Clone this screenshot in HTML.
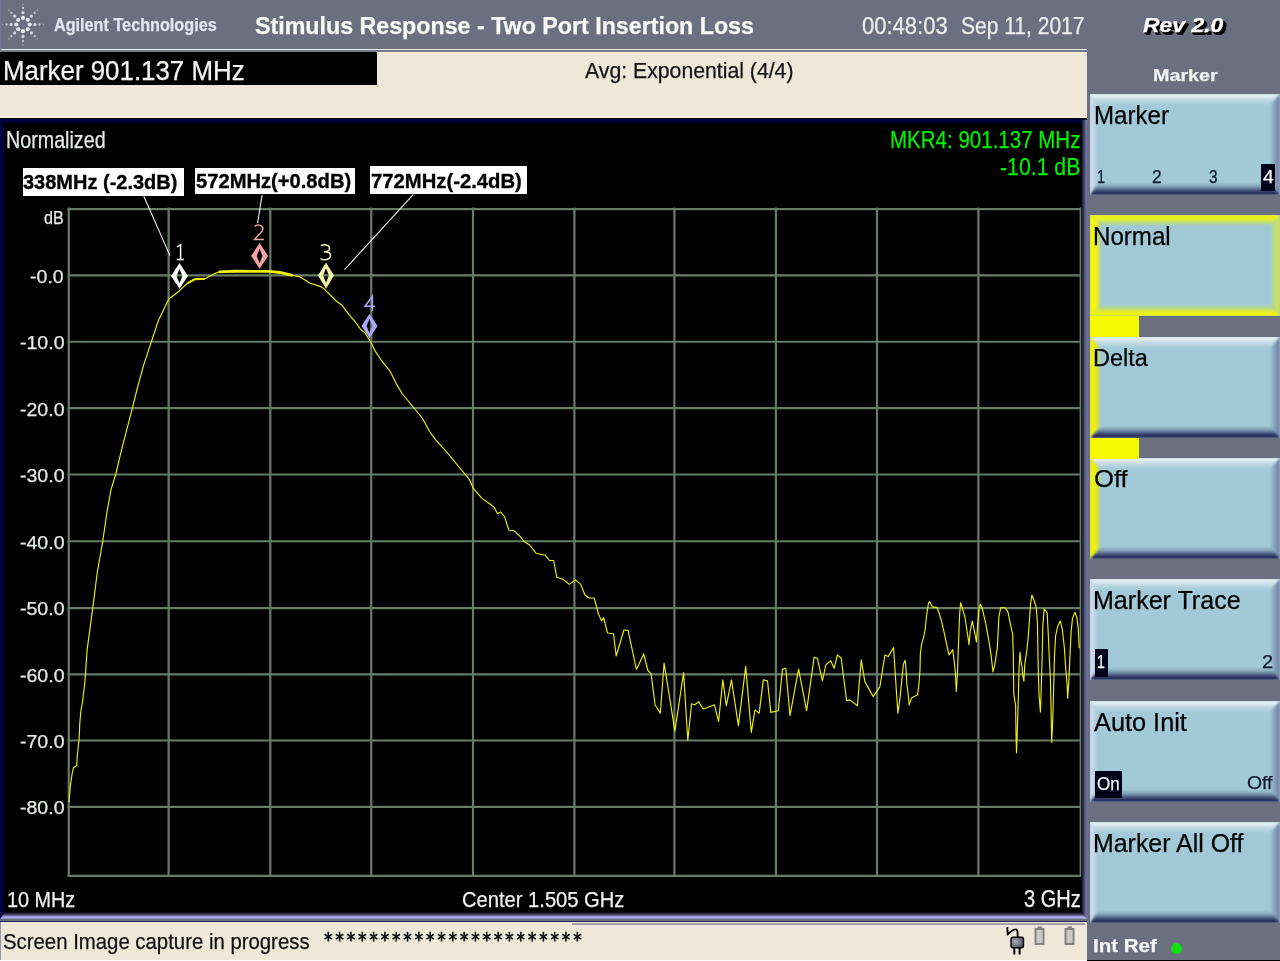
<!DOCTYPE html>
<html><head><meta charset="utf-8"><style>
html,body{margin:0;padding:0}
body{width:1280px;height:961px;overflow:hidden;position:relative;background:#6a7080;font-family:"Liberation Sans",sans-serif}
.a{position:absolute}
.t{position:absolute;white-space:pre;transform-origin:0 0;font-family:"Liberation Sans",sans-serif;-webkit-text-stroke:0.25px currentColor}
.sk{position:absolute;left:1090px;width:190px;height:101px;background:#a1c9d7;overflow:hidden}
.sk .bt{position:absolute;left:0;top:0;width:100%;height:11px;background:linear-gradient(to bottom,#f2f5fb 0,#dde8f0 3px,#a1c9d7 11px)}
.sk .bb{position:absolute;left:0;bottom:0;width:100%;height:11px;background:linear-gradient(to top,#1e1e4c 0,#303868 2px,#6a88a0 6px,#a1c9d7 11px)}
.sk .bl{position:absolute;left:0;top:0;width:8px;height:100%;background:linear-gradient(to right,#d2dcf0 0,#c4d6e8 3px,rgba(162,202,216,0) 8px)}
.sk .br{position:absolute;right:0;top:0;width:6px;height:100%;background:linear-gradient(to left,#7884a0 0,#8ca4b8 2px,rgba(162,202,216,0) 6px)}
.hl{position:absolute;background:#000018}
</style></head><body>

<div class="a" style="left:0;top:0;width:1px;height:50px;background:#7478a0"></div>
<div class="a" style="left:1px;top:49px;width:1086px;height:1px;background:#e6eaea"></div>
<div class="a" style="left:0;top:50px;width:1087px;height:2px;background:#737a8a"></div>
<svg class="a" style="left:0;top:0" width="50" height="48"><circle cx="23.00" cy="17.80" r="2.1" fill="#f4f6fa" fill-opacity="0.9"/><circle cx="27.74" cy="19.76" r="2.1" fill="#f4f6fa" fill-opacity="0.9"/><circle cx="29.70" cy="24.50" r="2.1" fill="#f4f6fa" fill-opacity="0.9"/><circle cx="27.74" cy="29.24" r="2.1" fill="#f4f6fa" fill-opacity="0.9"/><circle cx="23.00" cy="31.20" r="2.1" fill="#f4f6fa" fill-opacity="0.9"/><circle cx="18.26" cy="29.24" r="2.1" fill="#f4f6fa" fill-opacity="0.9"/><circle cx="16.30" cy="24.50" r="2.1" fill="#f4f6fa" fill-opacity="0.9"/><circle cx="18.26" cy="19.76" r="2.1" fill="#f4f6fa" fill-opacity="0.9"/><circle cx="23.00" cy="12.60" r="1.55" fill="#f4f6fa" fill-opacity="0.8"/><circle cx="31.41" cy="16.09" r="1.55" fill="#f4f6fa" fill-opacity="0.8"/><circle cx="34.90" cy="24.50" r="1.55" fill="#f4f6fa" fill-opacity="0.8"/><circle cx="31.41" cy="32.91" r="1.55" fill="#f4f6fa" fill-opacity="0.8"/><circle cx="23.00" cy="36.40" r="1.55" fill="#f4f6fa" fill-opacity="0.8"/><circle cx="14.59" cy="32.91" r="1.55" fill="#f4f6fa" fill-opacity="0.8"/><circle cx="11.10" cy="24.50" r="1.55" fill="#f4f6fa" fill-opacity="0.8"/><circle cx="14.59" cy="16.09" r="1.55" fill="#f4f6fa" fill-opacity="0.8"/><circle cx="23.00" cy="8.00" r="1.15" fill="#f4f6fa" fill-opacity="0.65"/><circle cx="34.67" cy="12.83" r="1.15" fill="#f4f6fa" fill-opacity="0.65"/><circle cx="39.50" cy="24.50" r="1.15" fill="#f4f6fa" fill-opacity="0.65"/><circle cx="34.67" cy="36.17" r="1.15" fill="#f4f6fa" fill-opacity="0.65"/><circle cx="23.00" cy="41.00" r="1.15" fill="#f4f6fa" fill-opacity="0.65"/><circle cx="11.33" cy="36.17" r="1.15" fill="#f4f6fa" fill-opacity="0.65"/><circle cx="6.50" cy="24.50" r="1.15" fill="#f4f6fa" fill-opacity="0.65"/><circle cx="11.33" cy="12.83" r="1.15" fill="#f4f6fa" fill-opacity="0.65"/><circle cx="23.00" cy="4.20" r="0.85" fill="#f4f6fa" fill-opacity="0.4"/><circle cx="37.35" cy="10.15" r="0.85" fill="#f4f6fa" fill-opacity="0.4"/><circle cx="43.30" cy="24.50" r="0.85" fill="#f4f6fa" fill-opacity="0.4"/><circle cx="37.35" cy="38.85" r="0.85" fill="#f4f6fa" fill-opacity="0.4"/><circle cx="23.00" cy="44.80" r="0.85" fill="#f4f6fa" fill-opacity="0.4"/><circle cx="8.65" cy="38.85" r="0.85" fill="#f4f6fa" fill-opacity="0.4"/><circle cx="2.70" cy="24.50" r="0.85" fill="#f4f6fa" fill-opacity="0.4"/><circle cx="8.65" cy="10.15" r="0.85" fill="#f4f6fa" fill-opacity="0.4"/></svg>
<div class="a" style="left:0;top:52px;width:1087px;height:66px;background:#efe8d9"></div>
<div class="a" style="left:0;top:116.5px;width:1087px;height:1px;background:#faf2e4"></div>
<div class="a" style="left:0;top:52.4px;width:376.6px;height:32.5px;background:#000"></div>
<div class="a" style="left:0;top:118px;width:1087px;height:804px;background:#000"></div>
<div class="a" style="left:0;top:119px;width:1083px;height:5px;background:linear-gradient(to bottom,#000040 0,#00004c 1.5px,#000030 3px,#000 5px)"></div>
<div class="a" style="left:0;top:119px;width:5px;height:800px;background:linear-gradient(to right,#00004c 0,#000048 2px,#000020 3.5px,#000 5px)"></div>
<div class="a" style="left:1081px;top:120px;width:6px;height:799px;background:linear-gradient(to right,#000 0,#2a2a48 2px,#6c6ca0 5px,#6870a0 6px)"></div>
<div class="a" style="left:0;top:912px;width:1087px;height:7px;background:linear-gradient(to bottom,#000 0,#50507a 3px,#b0b0f0 5px,#a8a8e0 6px,#8088a8 7px);clip-path:polygon(5px 0,1081px 0,1087px 7px,0 7px)"></div>
<div class="a" style="left:0;top:919px;width:1087px;height:2px;background:#687080"></div>
<div class="a" style="left:0;top:921px;width:1087px;height:1px;background:#24245a"></div>
<svg class="a" style="left:0;top:0" width="1087" height="922"><line x1="68.75" y1="207.6" x2="68.75" y2="876.8" stroke="#687a68" stroke-width="2.2"/><line x1="168.60" y1="207.6" x2="168.60" y2="876.8" stroke="#687a68" stroke-width="2.2"/><line x1="270.30" y1="207.6" x2="270.30" y2="876.8" stroke="#687a68" stroke-width="2.2"/><line x1="371.25" y1="207.6" x2="371.25" y2="876.8" stroke="#687a68" stroke-width="2.2"/><line x1="473.00" y1="207.6" x2="473.00" y2="876.8" stroke="#687a68" stroke-width="2.2"/><line x1="574.40" y1="207.6" x2="574.40" y2="876.8" stroke="#687a68" stroke-width="2.2"/><line x1="674.40" y1="207.6" x2="674.40" y2="876.8" stroke="#687a68" stroke-width="2.2"/><line x1="775.90" y1="207.6" x2="775.90" y2="876.8" stroke="#687a68" stroke-width="2.2"/><line x1="877.00" y1="207.6" x2="877.00" y2="876.8" stroke="#687a68" stroke-width="2.2"/><line x1="978.40" y1="207.6" x2="978.40" y2="876.8" stroke="#687a68" stroke-width="2.2"/><line x1="1080.40" y1="207.6" x2="1080.40" y2="876.8" stroke="#687a68" stroke-width="1.6"/><line x1="67.6" y1="209.05" x2="1081" y2="209.05" stroke="#687a68" stroke-width="2.2"/><line x1="67.6" y1="275.35" x2="1081" y2="275.35" stroke="#687a68" stroke-width="2.2"/><line x1="67.6" y1="341.75" x2="1081" y2="341.75" stroke="#687a68" stroke-width="2.2"/><line x1="67.6" y1="408.10" x2="1081" y2="408.10" stroke="#687a68" stroke-width="2.2"/><line x1="67.6" y1="474.50" x2="1081" y2="474.50" stroke="#687a68" stroke-width="2.2"/><line x1="67.6" y1="541.25" x2="1081" y2="541.25" stroke="#687a68" stroke-width="2.2"/><line x1="67.6" y1="608.05" x2="1081" y2="608.05" stroke="#687a68" stroke-width="2.2"/><line x1="67.6" y1="674.40" x2="1081" y2="674.40" stroke="#687a68" stroke-width="2.2"/><line x1="67.6" y1="740.50" x2="1081" y2="740.50" stroke="#687a68" stroke-width="2.2"/><line x1="67.6" y1="806.90" x2="1081" y2="806.90" stroke="#687a68" stroke-width="2.2"/><line x1="67.6" y1="875.80" x2="1081" y2="875.80" stroke="#687a68" stroke-width="2.2"/><polyline points="69.0,802.0 70.4,785.4 71.9,775.0 73.5,767.7 76.7,765.6 77.3,756.0 79.2,737.5 79.8,723.0 80.8,711.5 82.5,702.0 83.5,693.8 85.0,681.0 86.0,665.6 87.1,650.2 92.7,608.3 97.5,570.8 102.7,541.7 106.9,512.5 111.0,489.6 115.8,474.0 121.5,450.2 132.3,408.3 137.5,387.5 143.8,364.6 151.7,340.6 158.3,320.8 168.8,299.0 177.0,292.7 180.0,290.2 187.8,283.0 194.8,279.2 205.0,278.8 214.4,273.8 219.0,271.9 233.0,271.9 234.7,271.0 269.0,271.4 280.0,272.5 292.5,275.3 300.3,276.9 309.7,283.0 320.6,286.6 323.8,288.6 336.2,301.0 342.5,305.8 348.8,314.4 354.6,321.2 361.2,330.0 365.0,332.7 371.2,343.0 375.4,351.4 381.6,360.7 390.0,371.1 396.2,383.6 402.4,394.0 412.8,406.5 422.2,418.0 429.5,431.5 435.7,439.8 446.1,451.3 460.7,469.0 469.4,479.4 473.5,488.7 481.8,498.1 490.2,504.3 494.3,507.5 497.5,513.7 500.6,512.0 504.7,516.8 508.9,530.3 514.1,530.8 520.3,536.6 524.5,541.8 529.7,545.0 536.0,553.2 545.3,555.3 549.5,560.5 553.6,560.5 556.8,577.2 563.0,579.2 569.2,584.4 575.5,579.9 580.7,584.4 584.8,594.8 589.0,598.0 594.2,598.0 598.4,613.6 601.5,620.9 603.6,617.7 607.5,633.0 613.5,633.7 616.2,656.0 623.9,630.0 628.1,630.4 636.4,669.5 643.7,653.9 647.9,670.5 651.0,673.6 655.1,704.8 660.3,713.2 664.1,663.2 674.9,730.9 683.6,672.6 687.8,740.2 691.6,703.8 694.7,704.8 698.8,701.7 703.0,709.0 706.1,708.0 714.4,704.8 718.6,721.5 722.8,679.9 726.3,705.9 731.5,679.9 738.4,725.6 745.7,666.4 751.3,732.4 755.0,709.9 759.2,713.2 763.3,679.9 767.5,680.8 770.8,712.4 778.3,710.7 782.5,669.1 785.8,668.3 790.0,715.7 798.6,669.1 806.6,710.7 814.1,657.4 817.4,658.3 822.4,680.8 825.8,664.9 830.8,660.8 834.1,668.3 837.4,654.9 841.2,658.3 846.6,700.7 849.9,699.9 857.4,705.7 861.2,659.9 864.9,681.6 873.2,696.6 879.9,686.6 884.9,655.0 888.2,656.6 893.5,647.5 897.9,713.2 900.0,698.1 902.0,677.8 903.4,664.3 905.1,660.3 906.1,669.7 906.8,683.2 908.4,696.8 909.2,704.9 911.5,698.1 917.6,694.7 918.9,684.6 920.0,669.7 920.3,654.9 921.6,644.1 923.6,637.3 925.0,630.5 926.4,617.0 928.4,603.5 929.5,601.5 932.4,606.9 937.2,607.6 941.2,619.7 944.6,634.6 946.6,644.1 948.9,654.9 951.1,652.2 952.7,649.5 954.1,660.3 955.4,673.8 956.3,691.4 957.4,673.8 958.4,646.8 959.5,617.0 960.5,602.8 962.2,607.6 964.9,617.0 966.9,630.5 968.2,638.6 968.9,644.7 970.3,630.5 972.3,621.1 974.3,630.5 976.4,642.0 977.7,623.8 979.1,608.9 980.4,604.2 982.4,608.9 985.8,623.8 989.2,642.7 991.2,656.2 993.0,671.8 994.6,665.7 997.3,648.1 998.9,617.0 1000.7,607.6 1005.3,607.7 1008.0,612.1 1010.6,625.4 1012.7,634.2 1013.3,655.5 1013.8,694.4 1015.6,705.0 1016.0,733.4 1016.5,752.8 1017.2,733.4 1018.2,701.5 1019.1,667.9 1020.0,652.0 1020.9,660.8 1022.1,667.9 1022.7,675.0 1023.9,681.2 1024.8,664.3 1026.9,650.2 1028.3,636.0 1029.7,616.5 1030.6,603.3 1031.9,595.0 1034.5,601.5 1036.3,607.7 1037.5,624.5 1038.0,657.3 1038.9,692.7 1040.4,712.1 1041.1,692.7 1042.1,659.0 1042.8,626.3 1044.1,608.8 1047.2,613.0 1048.3,635.0 1049.6,664.3 1050.4,678.5 1051.3,721.0 1051.7,742.2 1052.7,721.0 1053.5,692.7 1054.5,655.5 1055.6,636.0 1057.6,626.5 1060.3,621.1 1062.3,629.2 1064.4,648.2 1065.7,668.5 1067.1,684.7 1067.7,698.3 1068.7,683.4 1069.8,659.0 1071.1,632.0 1072.5,618.4 1074.9,612.3 1076.8,617.1 1078.2,627.9 1079.2,648.2" fill="none" stroke="#f0f000" stroke-width="1.15" stroke-linejoin="round"/><polyline points="219,271.9 234.7,271.2 269,271.4 280,272.5 292.5,275.3" fill="none" stroke="#f0f000" stroke-width="2.8"/><polyline points="187.8,283 194.8,279.2 205,278.75" fill="none" stroke="#f0f000" stroke-width="2.0"/><line x1="143.8" y1="196.2" x2="170" y2="255.6" stroke="#f0f0f0" stroke-width="1.1"/><line x1="262.1" y1="195.2" x2="257.6" y2="223" stroke="#f0f0f0" stroke-width="1.1"/><line x1="413.4" y1="194.3" x2="344.5" y2="269.7" stroke="#f0f0f0" stroke-width="1.1"/><path d="M179.50,263.00 L187.90,275.90 L179.50,288.80 L171.10,275.90 Z M179.50,268.65 L182.40,275.90 L179.50,283.15 L176.60,275.90 Z" fill="#ffffff" fill-rule="evenodd"/><path d="M259.60,243.00 L268.00,255.90 L259.60,268.80 L251.20,255.90 Z M259.60,248.65 L262.50,255.90 L259.60,263.15 L256.70,255.90 Z" fill="#f4a4a4" fill-rule="evenodd"/><path d="M326.00,262.45 L334.00,275.60 L326.00,288.75 L318.00,275.60 Z M326.00,268.35 L328.90,275.60 L326.00,282.85 L323.10,275.60 Z" fill="#f4f4a8" fill-rule="evenodd"/><path d="M369.50,313.75 L377.50,326.00 L369.50,338.25 L361.50,326.00 Z M369.50,318.75 L372.40,326.00 L369.50,333.25 L366.60,326.00 Z" fill="#a8a8fc" fill-rule="evenodd"/><path d="M177.0,246.79999999999998 L180.6,244.79999999999998 L180.6,259.5 M176.79999999999998,259.5 L183.79999999999998,259.5" fill="none" stroke="#ffffff" stroke-width="1.5"/><path d="M254.8,226.39999999999998 C256.4,224.5 262.5,224.2 262.9,228.5 C263.1,231.7 258.9,234.2 254.6,239.39999999999998 L263.9,239.39999999999998" fill="none" stroke="#f4a4a4" stroke-width="1.5"/><path d="M320.9,245.7 C323.2,244.39999999999998 329.5,244.2 329.5,248.2 C329.5,251.0 326.7,251.79999999999998 323.9,251.79999999999998 C327.7,251.79999999999998 330.5,252.79999999999998 330.5,255.39999999999998 C330.5,260.0 323.2,260.4 320.4,258.7" fill="none" stroke="#f4f4a8" stroke-width="1.5"/><path d="M375.0,306.3 L365.0,306.3 L372.4,296.3 L372.4,311.09999999999997" fill="none" stroke="#a8a8fc" stroke-width="1.5" stroke-linejoin="miter"/></svg>
<div class="a" style="left:22.6px;top:167.7px;width:161px;height:28.5px;background:#fff"></div>
<div class="a" style="left:195.3px;top:167.7px;width:160px;height:26.8px;background:#fff"></div>
<div class="a" style="left:370.1px;top:166.3px;width:157px;height:27.5px;background:#fff"></div>
<div class="a" style="left:0;top:922px;width:1087px;height:39px;background:#efe8d9"></div>
<div class="a" style="left:0;top:922px;width:1px;height:39px;background:#9098a8"></div>
<div class="a" style="left:572px;top:923.3px;width:513px;height:1.6px;background:#a0a2a6"></div>
<div class="a" style="left:0;top:960px;width:1087px;height:1px;background:#fbfbfb"></div>
<div class="a" style="left:1087px;top:959.5px;width:193px;height:1.5px;background:#000"></div>
<svg class="a" style="left:0;top:0" width="1087" height="961"><line x1="328.30" y1="931.80" x2="328.30" y2="941.60" stroke="#111" stroke-width="1.6"/><line x1="324.58" y1="934.25" x2="332.02" y2="939.15" stroke="#111" stroke-width="1.6"/><line x1="324.58" y1="939.15" x2="332.02" y2="934.25" stroke="#111" stroke-width="1.6"/><line x1="339.62" y1="931.80" x2="339.62" y2="941.60" stroke="#111" stroke-width="1.6"/><line x1="335.90" y1="934.25" x2="343.34" y2="939.15" stroke="#111" stroke-width="1.6"/><line x1="335.90" y1="939.15" x2="343.34" y2="934.25" stroke="#111" stroke-width="1.6"/><line x1="350.94" y1="931.80" x2="350.94" y2="941.60" stroke="#111" stroke-width="1.6"/><line x1="347.22" y1="934.25" x2="354.66" y2="939.15" stroke="#111" stroke-width="1.6"/><line x1="347.22" y1="939.15" x2="354.66" y2="934.25" stroke="#111" stroke-width="1.6"/><line x1="362.26" y1="931.80" x2="362.26" y2="941.60" stroke="#111" stroke-width="1.6"/><line x1="358.54" y1="934.25" x2="365.98" y2="939.15" stroke="#111" stroke-width="1.6"/><line x1="358.54" y1="939.15" x2="365.98" y2="934.25" stroke="#111" stroke-width="1.6"/><line x1="373.58" y1="931.80" x2="373.58" y2="941.60" stroke="#111" stroke-width="1.6"/><line x1="369.86" y1="934.25" x2="377.30" y2="939.15" stroke="#111" stroke-width="1.6"/><line x1="369.86" y1="939.15" x2="377.30" y2="934.25" stroke="#111" stroke-width="1.6"/><line x1="384.90" y1="931.80" x2="384.90" y2="941.60" stroke="#111" stroke-width="1.6"/><line x1="381.18" y1="934.25" x2="388.62" y2="939.15" stroke="#111" stroke-width="1.6"/><line x1="381.18" y1="939.15" x2="388.62" y2="934.25" stroke="#111" stroke-width="1.6"/><line x1="396.22" y1="931.80" x2="396.22" y2="941.60" stroke="#111" stroke-width="1.6"/><line x1="392.50" y1="934.25" x2="399.94" y2="939.15" stroke="#111" stroke-width="1.6"/><line x1="392.50" y1="939.15" x2="399.94" y2="934.25" stroke="#111" stroke-width="1.6"/><line x1="407.54" y1="931.80" x2="407.54" y2="941.60" stroke="#111" stroke-width="1.6"/><line x1="403.82" y1="934.25" x2="411.26" y2="939.15" stroke="#111" stroke-width="1.6"/><line x1="403.82" y1="939.15" x2="411.26" y2="934.25" stroke="#111" stroke-width="1.6"/><line x1="418.86" y1="931.80" x2="418.86" y2="941.60" stroke="#111" stroke-width="1.6"/><line x1="415.14" y1="934.25" x2="422.58" y2="939.15" stroke="#111" stroke-width="1.6"/><line x1="415.14" y1="939.15" x2="422.58" y2="934.25" stroke="#111" stroke-width="1.6"/><line x1="430.18" y1="931.80" x2="430.18" y2="941.60" stroke="#111" stroke-width="1.6"/><line x1="426.46" y1="934.25" x2="433.90" y2="939.15" stroke="#111" stroke-width="1.6"/><line x1="426.46" y1="939.15" x2="433.90" y2="934.25" stroke="#111" stroke-width="1.6"/><line x1="441.50" y1="931.80" x2="441.50" y2="941.60" stroke="#111" stroke-width="1.6"/><line x1="437.78" y1="934.25" x2="445.22" y2="939.15" stroke="#111" stroke-width="1.6"/><line x1="437.78" y1="939.15" x2="445.22" y2="934.25" stroke="#111" stroke-width="1.6"/><line x1="452.82" y1="931.80" x2="452.82" y2="941.60" stroke="#111" stroke-width="1.6"/><line x1="449.10" y1="934.25" x2="456.54" y2="939.15" stroke="#111" stroke-width="1.6"/><line x1="449.10" y1="939.15" x2="456.54" y2="934.25" stroke="#111" stroke-width="1.6"/><line x1="464.14" y1="931.80" x2="464.14" y2="941.60" stroke="#111" stroke-width="1.6"/><line x1="460.42" y1="934.25" x2="467.86" y2="939.15" stroke="#111" stroke-width="1.6"/><line x1="460.42" y1="939.15" x2="467.86" y2="934.25" stroke="#111" stroke-width="1.6"/><line x1="475.46" y1="931.80" x2="475.46" y2="941.60" stroke="#111" stroke-width="1.6"/><line x1="471.74" y1="934.25" x2="479.18" y2="939.15" stroke="#111" stroke-width="1.6"/><line x1="471.74" y1="939.15" x2="479.18" y2="934.25" stroke="#111" stroke-width="1.6"/><line x1="486.78" y1="931.80" x2="486.78" y2="941.60" stroke="#111" stroke-width="1.6"/><line x1="483.06" y1="934.25" x2="490.50" y2="939.15" stroke="#111" stroke-width="1.6"/><line x1="483.06" y1="939.15" x2="490.50" y2="934.25" stroke="#111" stroke-width="1.6"/><line x1="498.10" y1="931.80" x2="498.10" y2="941.60" stroke="#111" stroke-width="1.6"/><line x1="494.38" y1="934.25" x2="501.82" y2="939.15" stroke="#111" stroke-width="1.6"/><line x1="494.38" y1="939.15" x2="501.82" y2="934.25" stroke="#111" stroke-width="1.6"/><line x1="509.42" y1="931.80" x2="509.42" y2="941.60" stroke="#111" stroke-width="1.6"/><line x1="505.70" y1="934.25" x2="513.14" y2="939.15" stroke="#111" stroke-width="1.6"/><line x1="505.70" y1="939.15" x2="513.14" y2="934.25" stroke="#111" stroke-width="1.6"/><line x1="520.74" y1="931.80" x2="520.74" y2="941.60" stroke="#111" stroke-width="1.6"/><line x1="517.02" y1="934.25" x2="524.46" y2="939.15" stroke="#111" stroke-width="1.6"/><line x1="517.02" y1="939.15" x2="524.46" y2="934.25" stroke="#111" stroke-width="1.6"/><line x1="532.06" y1="931.80" x2="532.06" y2="941.60" stroke="#111" stroke-width="1.6"/><line x1="528.34" y1="934.25" x2="535.78" y2="939.15" stroke="#111" stroke-width="1.6"/><line x1="528.34" y1="939.15" x2="535.78" y2="934.25" stroke="#111" stroke-width="1.6"/><line x1="543.38" y1="931.80" x2="543.38" y2="941.60" stroke="#111" stroke-width="1.6"/><line x1="539.66" y1="934.25" x2="547.10" y2="939.15" stroke="#111" stroke-width="1.6"/><line x1="539.66" y1="939.15" x2="547.10" y2="934.25" stroke="#111" stroke-width="1.6"/><line x1="554.70" y1="931.80" x2="554.70" y2="941.60" stroke="#111" stroke-width="1.6"/><line x1="550.98" y1="934.25" x2="558.42" y2="939.15" stroke="#111" stroke-width="1.6"/><line x1="550.98" y1="939.15" x2="558.42" y2="934.25" stroke="#111" stroke-width="1.6"/><line x1="566.02" y1="931.80" x2="566.02" y2="941.60" stroke="#111" stroke-width="1.6"/><line x1="562.30" y1="934.25" x2="569.74" y2="939.15" stroke="#111" stroke-width="1.6"/><line x1="562.30" y1="939.15" x2="569.74" y2="934.25" stroke="#111" stroke-width="1.6"/><line x1="577.34" y1="931.80" x2="577.34" y2="941.60" stroke="#111" stroke-width="1.6"/><line x1="573.62" y1="934.25" x2="581.06" y2="939.15" stroke="#111" stroke-width="1.6"/><line x1="573.62" y1="939.15" x2="581.06" y2="934.25" stroke="#111" stroke-width="1.6"/></svg>
<svg class="a" style="left:995px;top:915px" width="92" height="46">
<path d="M12.3,12 L12.6,19.6 C14.5,17.2 18.5,14.2 21,14.4 C22.6,14.6 22.7,16.5 22.7,22.3" fill="none" stroke="#000" stroke-width="1.8" stroke-linejoin="round"/>
<rect x="16" y="22.3" width="12.5" height="10.5" rx="2" fill="url(#pg)" stroke="#000" stroke-width="1.4"/>
<defs><radialGradient id="pg" cx="0.35" cy="0.4" r="0.7"><stop offset="0" stop-color="#a8a8b8"/><stop offset="1" stop-color="#505060"/></radialGradient></defs>
<rect x="18.3" y="32.8" width="2" height="6.7" fill="#000"/><rect x="23.6" y="32.8" width="2" height="6.7" fill="#000"/>
<rect x="40.5" y="14" width="8" height="15" fill="#c8c8c8" stroke="#808080" stroke-width="1.9"/>
<rect x="42.6" y="11.3" width="4.2" height="2.6" fill="#808080"/>
<rect x="70.5" y="14" width="8" height="15" fill="#c8c8c8" stroke="#808080" stroke-width="1.9"/>
<rect x="72.6" y="11.3" width="4.2" height="2.6" fill="#808080"/>
</svg>
<div class="sk" style="top:94px"><div class="a" style="left:0;top:0;width:190px;height:101px;filter:blur(0.9px)"><div class="a" style="left:0;top:0;width:190px;height:11px;background:linear-gradient(to bottom,#f2f6fc 0,#e6eef4 2px,#c8dce6 5px,#a1c9d7 11px);clip-path:polygon(0 0,190px 0,180px 11px,8px 11px)"></div><div class="a" style="left:180px;top:0;width:10px;height:101px;background:linear-gradient(to left,#7080a4 0,#7c90ac 3px,#8eb0c4 7px,#a1c9d7 10px);clip-path:polygon(10px 0,10px 101px,0 89px,0 11px)"></div><div class="a" style="left:0;top:89px;width:190px;height:12px;background:linear-gradient(to top,#1a1a46 0,#24285a 2px,#4a5a80 5px,#7c9cb0 8px,#a1c9d7 12px);clip-path:polygon(8px 0,180px 0,190px 12px,0 12px)"></div><div class="a" style="left:0;top:0;width:8px;height:101px;background:linear-gradient(to right,#d4dcf0 0,#c8d8ea 3px,#a1c9d7 8px);clip-path:polygon(0 0,8px 11px,8px 89px,0 101px)"></div></div></div>
<div class="sk" style="top:215px"><div class="a" style="left:0;top:0;width:190px;height:101px;filter:blur(0.9px)"><div class="a" style="left:0;top:0;width:190px;height:11px;background:linear-gradient(to bottom,#f8f800 0,#f0f208 2px,#dcea40 5px,#b8d888 8px,#a1c9d7 11px);clip-path:polygon(0 0,190px 0,180px 11px,11px 11px)"></div><div class="a" style="left:180px;top:0;width:10px;height:101px;background:linear-gradient(to left,#d0e448 0,#c4de68 4px,#b0d498 7px,#a1c9d7 10px);clip-path:polygon(10px 0,10px 101px,0 90px,0 11px)"></div><div class="a" style="left:0;top:90px;width:190px;height:11px;background:linear-gradient(to top,#f8f800 0,#f0f208 2px,#dcea40 5px,#b8d888 8px,#a1c9d7 11px);clip-path:polygon(11px 0,180px 0,190px 11px,0 11px)"></div><div class="a" style="left:0;top:0;width:11px;height:101px;background:linear-gradient(to right,#f8f800 0,#f6f600 6px,#d8e648 8px,#b8d890 9.5px,#a1c9d7 11px);clip-path:polygon(0 0,11px 11px,11px 90px,0 101px)"></div></div></div>
<div class="sk" style="top:337px"><div class="a" style="left:0;top:0;width:190px;height:101px;filter:blur(0.9px)"><div class="a" style="left:0;top:0;width:190px;height:11px;background:linear-gradient(to bottom,#f2f6fc 0,#e6eef4 2px,#c8dce6 5px,#a1c9d7 11px);clip-path:polygon(0 0,190px 0,180px 11px,11px 11px)"></div><div class="a" style="left:180px;top:0;width:10px;height:101px;background:linear-gradient(to left,#7080a4 0,#7c90ac 3px,#8eb0c4 7px,#a1c9d7 10px);clip-path:polygon(10px 0,10px 101px,0 89px,0 11px)"></div><div class="a" style="left:0;top:89px;width:190px;height:12px;background:linear-gradient(to top,#1a1a46 0,#24285a 2px,#4a5a80 5px,#7c9cb0 8px,#a1c9d7 12px);clip-path:polygon(11px 0,180px 0,190px 12px,0 12px)"></div><div class="a" style="left:0;top:0;width:11px;height:101px;background:linear-gradient(to right,#f4f400 0,#eef00a 5px,#d4e448 7.5px,#b4d498 9.5px,#a1c9d7 11px);clip-path:polygon(0 0,11px 11px,11px 89px,0 101px)"></div></div></div>
<div class="sk" style="top:458px"><div class="a" style="left:0;top:0;width:190px;height:101px;filter:blur(0.9px)"><div class="a" style="left:0;top:0;width:190px;height:11px;background:linear-gradient(to bottom,#f2f6fc 0,#e6eef4 2px,#c8dce6 5px,#a1c9d7 11px);clip-path:polygon(0 0,190px 0,180px 11px,11px 11px)"></div><div class="a" style="left:180px;top:0;width:10px;height:101px;background:linear-gradient(to left,#7080a4 0,#7c90ac 3px,#8eb0c4 7px,#a1c9d7 10px);clip-path:polygon(10px 0,10px 101px,0 89px,0 11px)"></div><div class="a" style="left:0;top:89px;width:190px;height:12px;background:linear-gradient(to top,#1a1a46 0,#24285a 2px,#4a5a80 5px,#7c9cb0 8px,#a1c9d7 12px);clip-path:polygon(11px 0,180px 0,190px 12px,0 12px)"></div><div class="a" style="left:0;top:0;width:11px;height:101px;background:linear-gradient(to right,#f4f400 0,#eef00a 5px,#d4e448 7.5px,#b4d498 9.5px,#a1c9d7 11px);clip-path:polygon(0 0,11px 11px,11px 89px,0 101px)"></div></div></div>
<div class="sk" style="top:579px"><div class="a" style="left:0;top:0;width:190px;height:101px;filter:blur(0.9px)"><div class="a" style="left:0;top:0;width:190px;height:11px;background:linear-gradient(to bottom,#f2f6fc 0,#e6eef4 2px,#c8dce6 5px,#a1c9d7 11px);clip-path:polygon(0 0,190px 0,180px 11px,8px 11px)"></div><div class="a" style="left:180px;top:0;width:10px;height:101px;background:linear-gradient(to left,#7080a4 0,#7c90ac 3px,#8eb0c4 7px,#a1c9d7 10px);clip-path:polygon(10px 0,10px 101px,0 89px,0 11px)"></div><div class="a" style="left:0;top:89px;width:190px;height:12px;background:linear-gradient(to top,#1a1a46 0,#24285a 2px,#4a5a80 5px,#7c9cb0 8px,#a1c9d7 12px);clip-path:polygon(8px 0,180px 0,190px 12px,0 12px)"></div><div class="a" style="left:0;top:0;width:8px;height:101px;background:linear-gradient(to right,#d4dcf0 0,#c8d8ea 3px,#a1c9d7 8px);clip-path:polygon(0 0,8px 11px,8px 89px,0 101px)"></div></div></div>
<div class="sk" style="top:701px"><div class="a" style="left:0;top:0;width:190px;height:101px;filter:blur(0.9px)"><div class="a" style="left:0;top:0;width:190px;height:11px;background:linear-gradient(to bottom,#f2f6fc 0,#e6eef4 2px,#c8dce6 5px,#a1c9d7 11px);clip-path:polygon(0 0,190px 0,180px 11px,8px 11px)"></div><div class="a" style="left:180px;top:0;width:10px;height:101px;background:linear-gradient(to left,#7080a4 0,#7c90ac 3px,#8eb0c4 7px,#a1c9d7 10px);clip-path:polygon(10px 0,10px 101px,0 89px,0 11px)"></div><div class="a" style="left:0;top:89px;width:190px;height:12px;background:linear-gradient(to top,#1a1a46 0,#24285a 2px,#4a5a80 5px,#7c9cb0 8px,#a1c9d7 12px);clip-path:polygon(8px 0,180px 0,190px 12px,0 12px)"></div><div class="a" style="left:0;top:0;width:8px;height:101px;background:linear-gradient(to right,#d4dcf0 0,#c8d8ea 3px,#a1c9d7 8px);clip-path:polygon(0 0,8px 11px,8px 89px,0 101px)"></div></div></div>
<div class="sk" style="top:822px"><div class="a" style="left:0;top:0;width:190px;height:101px;filter:blur(0.9px)"><div class="a" style="left:0;top:0;width:190px;height:11px;background:linear-gradient(to bottom,#f2f6fc 0,#e6eef4 2px,#c8dce6 5px,#a1c9d7 11px);clip-path:polygon(0 0,190px 0,180px 11px,8px 11px)"></div><div class="a" style="left:180px;top:0;width:10px;height:101px;background:linear-gradient(to left,#7080a4 0,#7c90ac 3px,#8eb0c4 7px,#a1c9d7 10px);clip-path:polygon(10px 0,10px 101px,0 89px,0 11px)"></div><div class="a" style="left:0;top:89px;width:190px;height:12px;background:linear-gradient(to top,#1a1a46 0,#24285a 2px,#4a5a80 5px,#7c9cb0 8px,#a1c9d7 12px);clip-path:polygon(8px 0,180px 0,190px 12px,0 12px)"></div><div class="a" style="left:0;top:0;width:8px;height:101px;background:linear-gradient(to right,#d4dcf0 0,#c8d8ea 3px,#a1c9d7 8px);clip-path:polygon(0 0,8px 11px,8px 89px,0 101px)"></div></div></div>
<div class="a" style="left:1090px;top:316px;width:49px;height:21px;background:#f8f800"></div>
<div class="a" style="left:1090px;top:437.5px;width:49px;height:21px;background:#f8f800"></div>
<div class="hl" style="left:1261.2px;top:164px;width:13.6px;height:27px"></div>
<div class="hl" style="left:1095px;top:649.2px;width:13.4px;height:27.5px"></div>
<div class="hl" style="left:1095px;top:771px;width:27.1px;height:27px"></div>
<div class="a" style="left:1171.4px;top:943.4px;width:11px;height:11px;border-radius:50%;background:#10e010"></div>
<div class="t" style="left:54.40px;top:15.00px;font-size:19.186px;line-height:19.186px;font-weight:bold;font-style:normal;color:#e2e6ee;transform:scaleX(0.8453);">Agilent Technologies</div>
<div class="t" style="left:254.90px;top:15.00px;font-size:23.256px;line-height:23.256px;font-weight:bold;font-style:normal;color:#f8f8f4;transform:scaleX(0.9988);">Stimulus Response - Two Port Insertion Loss</div>
<div class="t" style="left:861.80px;top:15.00px;font-size:23.547px;line-height:23.547px;font-weight:normal;font-style:normal;color:#ececec;transform:scaleX(0.9352);">00:48:03</div>
<div class="t" style="left:961.02px;top:14.00px;font-size:23.983px;line-height:23.983px;font-weight:normal;font-style:normal;color:#ececec;transform:scaleX(0.8766);">Sep 11, 2017</div>
<div class="t" style="left:1143.30px;top:15.00px;font-size:20.349px;line-height:20.349px;font-weight:bold;font-style:italic;color:#ffffff;transform:scaleX(1.1278);text-shadow:2px 2px 0 #000,2px 3px 0 #000,1px 2px 0 #000,3px 3px 0 #000;">Rev 2.0</div>
<div class="t" style="left:1153.00px;top:67.00px;font-size:17.078px;line-height:17.078px;font-weight:bold;font-style:normal;color:#f0f0f0;transform:scaleX(1.1571);">Marker</div>
<div class="t" style="left:2.80px;top:57.00px;font-size:27.180px;line-height:27.180px;font-weight:normal;font-style:normal;color:#f4f4f0;transform:scaleX(0.9524);">Marker 901.137 MHz</div>
<div class="t" style="left:585.40px;top:60.00px;font-size:22.238px;line-height:22.238px;font-weight:normal;font-style:normal;color:#141414;transform:scaleX(0.9555);">Avg: Exponential (4/4)</div>
<div class="t" style="left:6.16px;top:129.00px;font-size:23.401px;line-height:23.401px;font-weight:normal;font-style:normal;color:#e4eae4;transform:scaleX(0.8419);">Normalized</div>
<div class="t" style="left:889.61px;top:129.00px;font-size:23.110px;line-height:23.110px;font-weight:normal;font-style:normal;color:#00f000;transform:scaleX(0.8878);">MKR4: 901.137 MHz</div>
<div class="t" style="left:1000.10px;top:156.00px;font-size:23.547px;line-height:23.547px;font-weight:normal;font-style:normal;color:#00f000;transform:scaleX(0.9034);">-10.1 dB</div>
<div class="t" style="left:23.40px;top:172.00px;font-size:20.058px;line-height:20.058px;font-weight:bold;font-style:normal;color:#000000;transform:scaleX(0.9974);-webkit-text-stroke:0.35px #000;">338MHz (-2.3dB)</div>
<div class="t" style="left:195.80px;top:171.00px;font-size:20.494px;line-height:20.494px;font-weight:bold;font-style:normal;color:#000000;transform:scaleX(0.9841);-webkit-text-stroke:0.35px #000;">572MHz(+0.8dB)</div>
<div class="t" style="left:371.25px;top:171.00px;font-size:20.349px;line-height:20.349px;font-weight:bold;font-style:normal;color:#000000;transform:scaleX(0.9964);-webkit-text-stroke:0.35px #000;">772MHz(-2.4dB)</div>
<div class="t" style="left:7.23px;top:888.00px;font-size:22.820px;line-height:22.820px;font-weight:normal;font-style:normal;color:#eef2ee;transform:scaleX(0.8688);">10 MHz</div>
<div class="t" style="left:461.61px;top:888.00px;font-size:22.674px;line-height:22.674px;font-weight:normal;font-style:normal;color:#eef2ee;transform:scaleX(0.8895);">Center 1.505 GHz</div>
<div class="t" style="left:1023.75px;top:888.00px;font-size:23.547px;line-height:23.547px;font-weight:normal;font-style:normal;color:#eef2ee;transform:scaleX(0.8523);">3 GHz</div>
<div class="t" style="left:2.85px;top:930.00px;font-size:22.747px;line-height:22.747px;font-weight:normal;font-style:normal;color:#101010;transform:scaleX(0.8952);">Screen Image capture in progress</div>
<div class="t" style="left:1093.67px;top:103.00px;font-size:25.799px;line-height:25.799px;font-weight:normal;font-style:normal;color:#000000;transform:scaleX(0.9338);">Marker</div>
<div class="t" style="left:1097.12px;top:168.00px;font-size:18.605px;line-height:18.605px;font-weight:normal;font-style:normal;color:#101830;transform:scaleX(0.7778);">1</div>
<div class="t" style="left:1151.80px;top:168.00px;font-size:18.605px;line-height:18.605px;font-weight:normal;font-style:normal;color:#101830;transform:scaleX(0.9400);">2</div>
<div class="t" style="left:1208.70px;top:168.00px;font-size:18.605px;line-height:18.605px;font-weight:normal;font-style:normal;color:#101830;transform:scaleX(0.8300);">3</div>
<div class="t" style="left:1262.50px;top:168.00px;font-size:18.605px;line-height:18.605px;font-weight:normal;font-style:normal;color:#ffffff;transform:scaleX(1.0500);">4</div>
<div class="t" style="left:1093.33px;top:225.00px;font-size:24.855px;line-height:24.855px;font-weight:normal;font-style:normal;color:#000000;transform:scaleX(0.9705);">Normal</div>
<div class="t" style="left:1093.35px;top:346.00px;font-size:24.709px;line-height:24.709px;font-weight:normal;font-style:normal;color:#000000;transform:scaleX(0.9509);">Delta</div>
<div class="t" style="left:1093.53px;top:467.00px;font-size:23.837px;line-height:23.837px;font-weight:normal;font-style:normal;color:#000000;transform:scaleX(1.0742);">Off</div>
<div class="t" style="left:1093.10px;top:588.00px;font-size:25.145px;line-height:25.145px;font-weight:normal;font-style:normal;color:#000000;transform:scaleX(0.9973);">Marker Trace</div>
<div class="t" style="left:1097.22px;top:653.00px;font-size:18.169px;line-height:18.169px;font-weight:normal;font-style:normal;color:#ffffff;transform:scaleX(0.7778);">1</div>
<div class="t" style="left:1261.50px;top:654.00px;font-size:17.442px;line-height:17.442px;font-weight:normal;font-style:normal;color:#101830;transform:scaleX(1.1444);">2</div>
<div class="t" style="left:1093.70px;top:710.00px;font-size:25.145px;line-height:25.145px;font-weight:normal;font-style:normal;color:#000000;transform:scaleX(1.0075);">Auto Init</div>
<div class="t" style="left:1096.70px;top:775.00px;font-size:18.750px;line-height:18.750px;font-weight:normal;font-style:normal;color:#f0f0f0;transform:scaleX(0.9080);">On</div>
<div class="t" style="left:1246.50px;top:775.00px;font-size:17.733px;line-height:17.733px;font-weight:normal;font-style:normal;color:#101830;transform:scaleX(1.0917);">Off</div>
<div class="t" style="left:1093.15px;top:830.00px;font-size:26.163px;line-height:26.163px;font-weight:normal;font-style:normal;color:#000000;transform:scaleX(0.9525);">Marker All Off</div>
<div class="t" style="left:1093.30px;top:938.00px;font-size:17.733px;line-height:17.733px;font-weight:bold;font-style:normal;color:#f4f4f4;transform:scaleX(1.1571);">Int Ref</div>
<div class="t" style="left:44.40px;top:209.00px;font-size:18.314px;line-height:18.314px;font-weight:normal;font-style:normal;color:#e4eae4;transform:scaleX(0.8795);">dB</div>
<div class="t" style="left:29.70px;top:269.00px;font-size:17.733px;line-height:17.733px;font-weight:normal;font-style:normal;color:#e4eae4;transform:scaleX(1.1032);">-0.0</div>
<div class="t" style="left:19.80px;top:335.00px;font-size:17.733px;line-height:17.733px;font-weight:normal;font-style:normal;color:#e4eae4;transform:scaleX(1.1025);">-10.0</div>
<div class="t" style="left:19.80px;top:402.00px;font-size:17.733px;line-height:17.733px;font-weight:normal;font-style:normal;color:#e4eae4;transform:scaleX(1.1025);">-20.0</div>
<div class="t" style="left:19.80px;top:468.00px;font-size:17.733px;line-height:17.733px;font-weight:normal;font-style:normal;color:#e4eae4;transform:scaleX(1.1025);">-30.0</div>
<div class="t" style="left:19.80px;top:535.00px;font-size:17.733px;line-height:17.733px;font-weight:normal;font-style:normal;color:#e4eae4;transform:scaleX(1.1025);">-40.0</div>
<div class="t" style="left:19.80px;top:601.00px;font-size:17.733px;line-height:17.733px;font-weight:normal;font-style:normal;color:#e4eae4;transform:scaleX(1.1025);">-50.0</div>
<div class="t" style="left:19.80px;top:668.00px;font-size:17.733px;line-height:17.733px;font-weight:normal;font-style:normal;color:#e4eae4;transform:scaleX(1.1025);">-60.0</div>
<div class="t" style="left:19.80px;top:734.00px;font-size:17.733px;line-height:17.733px;font-weight:normal;font-style:normal;color:#e4eae4;transform:scaleX(1.1025);">-70.0</div>
<div class="t" style="left:19.80px;top:800.00px;font-size:17.733px;line-height:17.733px;font-weight:normal;font-style:normal;color:#e4eae4;transform:scaleX(1.1025);">-80.0</div>
</body></html>
